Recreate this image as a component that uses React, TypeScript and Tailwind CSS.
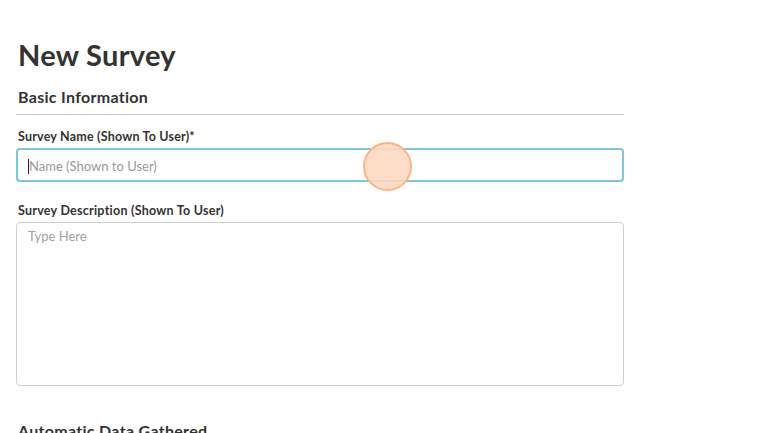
export default function App() {
  return (
    <div className="relative w-[774px] h-[433px] overflow-hidden bg-white font-['Lato',sans-serif] text-[#333]">
      <div className="pl-4 pt-[38px] w-[624px]">
        <h1 className="pl-[2px] text-[29px] font-bold leading-[34px] tracking-[0.3px]">New Survey</h1>
        <div className="mt-[15px] pb-[7px] border-b border-[#c8c8c8]">
          <h2 className="pl-[2px] text-[16px] font-bold leading-[20px] tracking-[0.3px]">Basic Information</h2>
        </div>
        <label className="block mt-[14px] pl-[2px] text-[12.5px] font-bold leading-[16px] tracking-[0.2px]">
          Survey Name (Shown To User)*
        </label>
        <div className="relative mt-[3px] h-[34px] rounded-[4px] border-2 border-[#7fc6d6] flex items-center pl-[10px] pt-[3px]">
          <span className="w-px h-[15px] bg-[#222]" />
          <span className="text-[13px] text-[#9a9a9a]">Name (Shown to User)</span>
          <span className="absolute left-[345px] top-[-8px] w-[49px] h-[49px] rounded-full bg-[#fdd8c2]/90 border-2 border-[#fcb589]" />
        </div>
        <label className="block mt-[21px] pl-[2px] text-[12.5px] font-bold leading-[16px] tracking-[0.25px]">
          Survey Description (Shown To User)
        </label>
        <div className="mt-[3px] h-[164px] rounded-[4px] border border-[#cfcfcf] px-[11px] pt-[4px] leading-[16px]">
          <span className="text-[13px] text-[#a0a0a0]">Type Here</span>
        </div>
        <h2 className="mt-[35px] pl-[2px] text-[16px] font-bold leading-[20px] tracking-[0.3px]">Automatic Data Gathered</h2>
      </div>
    </div>
  );
}
